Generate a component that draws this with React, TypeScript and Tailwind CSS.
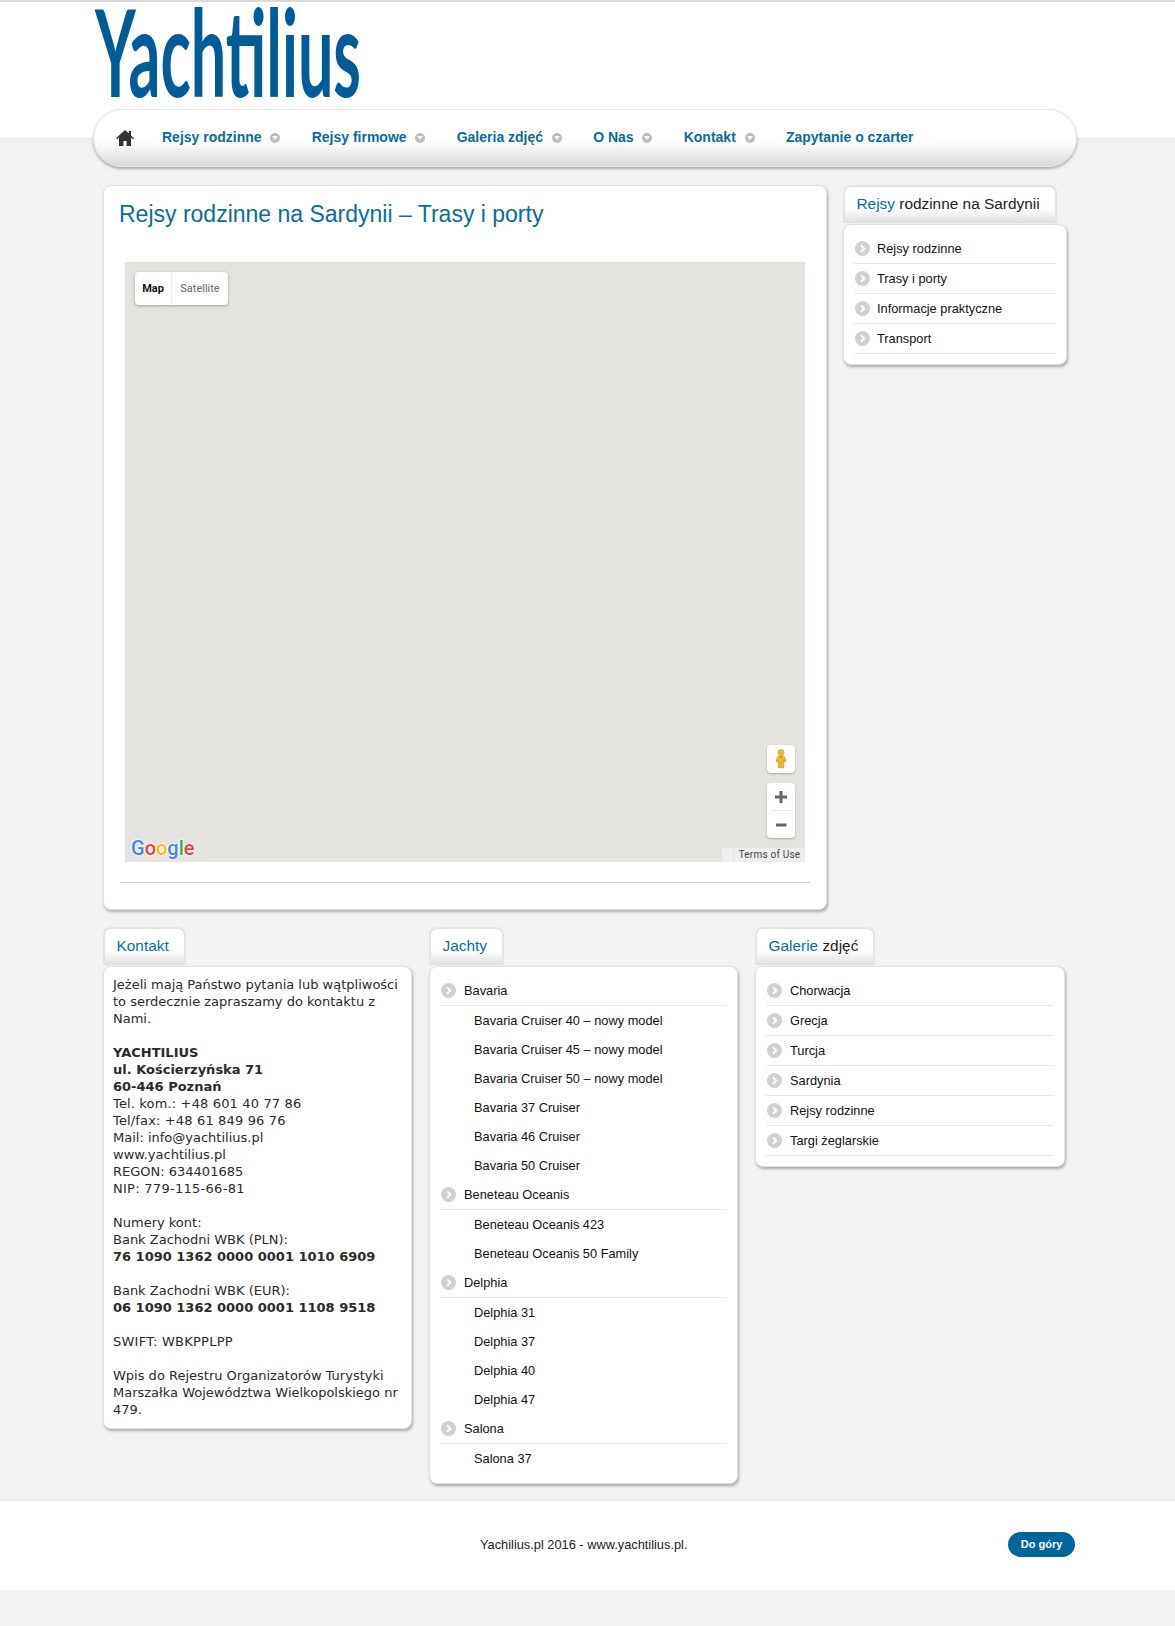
import React from 'react';

const arial = "font-['Liberation_Sans',Arial,sans-serif]";

const Bullet = () => (
    <span className="flex h-[15px] w-[15px] shrink-0 items-center justify-center rounded-full bg-[#d0d0d0]">
        <svg width="9" height="9" viewBox="0 0 9 9" fill="none">
            <path d="M3 1.2 6.3 4.5 3 7.8" stroke="#fff" strokeWidth="2" />
        </svg>
    </span>
);

const NavDot = () => (
    <span className="flex h-[10px] w-[10px] shrink-0 items-center justify-center rounded-full bg-[#bdbdbd]">
        <svg width="6" height="4" viewBox="0 0 6 4">
            <path d="M0 0h6L3 4z" fill="#fff" />
        </svg>
    </span>
);

const HomeIcon = () => (
    <svg width="18" height="16" viewBox="0 0 18 16" className="shrink-0">
        <path d="M9 0 0 8.2l.9 1L3 7.4V16h4.4v-5h3.2v5H15V7.4l2.1 1.8.9-1-3-2.7V1h-2.200v2.500z" fill="#333" />
    </svg>
);

const Tab = ({ blue, rest }: { blue: string; rest?: string }) => (
    <div className="h-[38px] w-fit rounded-t-lg border-2 border-b-0 border-[#e4e4e4] bg-gradient-to-b from-white from-[60%] to-[#dedede] pl-[11.5px] pr-[15px] pt-[7px] text-[15.4px] leading-[20px] text-[#222]">
        <span className="text-[#0b6c9f]">{blue}</span>
        {rest ? ` ${rest}` : ''}
    </div>
);

const Box = ({ className, children }: { className?: string; children: React.ReactNode }) => (
    <div className={`mt-px rounded-lg border border-[#e0e0e0] bg-white shadow-[1px_2px_3px_rgba(0,0,0,0.3)] ${className ?? ''}`}>
        {children}
    </div>
);

const ListRow = ({ label, wide }: { label: string; wide?: boolean }) => (
    <div className={`flex h-[30px] items-center border-b border-[#e8e8e8] pl-[1px] pr-[4px] text-[12.8px] text-[#111] ${wide ? 'gap-[8px]' : 'gap-[7px]'}`}>
        <Bullet />
        <span>{label}</span>
    </div>
);

const SubRow = ({ label }: { label: string }) => (
    <div className="flex h-[29px] items-center pl-[34px] text-[12.8px] text-[#111]">{label}</div>
);

const yachts = [
    { name: 'Bavaria', items: ['Bavaria Cruiser 40 – nowy model', 'Bavaria Cruiser 45 – nowy model', 'Bavaria Cruiser 50 – nowy model', 'Bavaria 37 Cruiser', 'Bavaria 46 Cruiser', 'Bavaria 50 Cruiser'] },
    { name: 'Beneteau Oceanis', items: ['Beneteau Oceanis 423', 'Beneteau Oceanis 50 Family'] },
    { name: 'Delphia', items: ['Delphia 31', 'Delphia 37', 'Delphia 40', 'Delphia 47'] },
    { name: 'Salona', items: ['Salona 37'] },
];

const navItems = ['Rejsy rodzinne', 'Rejsy firmowe', 'Galeria zdjęć', 'O Nas', 'Kontakt'];

const MapBox = () => (
    <div className="relative ml-[21px] mt-[34px] h-[600px] w-[680px] bg-[#e5e3df] font-['Roboto',sans-serif]">
        <div className="absolute left-[10px] top-[10px] flex h-[33px] w-[93px] items-center rounded-sm bg-white pt-px text-[11px] shadow-[0_1px_3px_rgba(0,0,0,0.3)]">
            <span className="flex h-full w-[37px] items-center justify-center border-r border-[#eee] font-bold text-[#111]">Map</span>
            <span className="flex h-full flex-1 items-center justify-center text-[#666]">Satellite</span>
        </div>

        <div className="absolute left-[642px] top-[483px] flex h-[28px] w-[28px] items-center justify-center rounded-sm bg-white shadow-[0_1px_2px_rgba(0,0,0,0.25)]">
            <svg width="12" height="20" viewBox="0 0 12 20">
                <circle cx="6" cy="3.500" r="3" fill="#f6b81d" stroke="#a88432" strokeWidth="0.5" />
                <path d="M3 7h6l2 5-1 1-1-2-.3 8H6.500V14h-1v5H3.300L3 11l-1 2-1-1z" fill="#f6b81d" stroke="#a88432" strokeWidth="0.5" />
                <circle cx="6" cy="8" r="1" fill="#e8622c" />
            </svg>
        </div>

        <div className="absolute left-[642px] top-[521px] flex h-[55px] w-[28px] flex-col items-center rounded-sm bg-white shadow-[0_1px_2px_rgba(0,0,0,0.25)]">
            <div className="flex h-[27px] items-center justify-center">
                <svg width="12" height="12" viewBox="0 0 12 12"><path d="M4.500 0h3v4.500H12v3H7.500V12h-3V7.500H0v-3h4.500z" fill="#666" /></svg>
            </div>
            <div className="h-px w-[19px] bg-[#e6e6e6]" />
            <div className="flex h-[27px] items-center justify-center">
                <svg width="12" height="12" viewBox="0 0 12 12"><path d="M1 4.500h10.500v3H1z" fill="#666" /></svg>
            </div>
        </div>

        <div className="absolute bottom-[1px] left-[6px] font-['Roboto',sans-serif] text-[20px] font-medium leading-[26px] [text-shadow:0_0_2px_#fff,0_0_2px_#fff,0_0_3px_#fff]">
            <span className="text-[#4285f4]">G</span>
            <span className="text-[#ea4335]">o</span>
            <span className="text-[#fbbc05]">o</span>
            <span className="text-[#4285f4]">g</span>
            <span className="text-[#34a853]">l</span>
            <span className="text-[#ea4335]">e</span>
        </div>

        <div className="absolute bottom-0 right-0 flex h-[14px] text-[10px] tracking-[0.2px] text-[#444]">
            <span className="mr-px h-full w-[11px] bg-[#efeeec]" />
            <span className="flex h-full w-[71px] items-center justify-center bg-[#efeeec] pb-px">Terms of Use</span>
        </div>
    </div>
);

const App = () => {
    return (
        <div className={`min-h-[1626px] bg-[#f2f2f2] ${arial}`}>
            <header className="h-[139px] border-b border-[#e8e8e8] border-t-2 border-t-[#d9d9d9] bg-white">
                <div className="ml-[95px] h-[102px] w-[600px]">
                    <svg width="600" height="102" viewBox="0 0 600 102" className="overflow-visible">
                        <text x="0" y="95" textLength="266" lengthAdjust="spacingAndGlyphs" fontFamily="Lato, sans-serif" fontWeight="700" fontSize="120" fill="#005b96">Yachtilius</text>
                    </svg>
                </div>
            </header>

            <div className="ml-[93px] w-[984px]">
                <nav className="relative -mt-[30px] flex h-[58px] items-center rounded-[30px] border border-[#e4e4e4] bg-gradient-to-b from-white from-[55%] to-[#d9d9d9] pb-[1px] pl-[22px] text-[14px] font-bold text-[#0b6a9e] shadow-[0_2px_3px_rgba(0,0,0,0.3)]">
                    <HomeIcon />
                    <div className="ml-[28px] flex items-center gap-[31.4px]">
                        {navItems.map((item) => (
                            <span key={item} className="flex items-center gap-[8.7px]">
                                {item}
                                <NavDot />
                            </span>
                        ))}
                        <span>Zapytanie o czarter</span>
                    </div>
                </nav>

                <div className="ml-[10px] mt-[18px] flex items-start gap-[16px]">
                    <main className="h-[725px] w-[724px] rounded-lg border border-[#e0e0e0] bg-white shadow-[1px_2px_3px_rgba(0,0,0,0.3)]">
                        <h1 className="ml-[15px] mt-[14px] text-[23px] leading-[28px] text-[#0b6c9f]">Rejsy rodzinne na Sardynii – Trasy i porty</h1>
                        <MapBox />
                        <div className="ml-[16px] mt-[20px] h-px w-[690px] bg-[#d4d4d4]" />
                    </main>

                    <aside className="w-[224px]">
                        <Tab blue="Rejsy" rest="rodzinne na Sardynii" />
                        <Box className="px-[10px] pb-[10px] pt-[9px]">
                            {['Rejsy rodzinne', 'Trasy i porty', 'Informacje praktyczne', 'Transport'].map((label) => (
                                <ListRow key={label} label={label} />
                            ))}
                        </Box>
                    </aside>
                </div>

                <div className="ml-[10px] mt-[17px] flex items-start gap-[17px]">
                    <section className="w-[309px]">
                        <Tab blue="Kontakt" />
                        <Box className="pb-[10px] pl-[9px] pr-[8px] pt-[9px] font-['DejaVu_Sans',Verdana,sans-serif] text-[13px] leading-[17px] text-[#2a2a2a]">
                            <p>Jeżeli mają Państwo pytania lub wątpliwości to serdecznie zapraszamy do kontaktu z Nami.</p>
                            <br />
                            <p className="font-bold">YACHTILIUS<br />ul. Kościerzyńska 71<br />60-446 Poznań</p>
                            <p>
                                <span className="tracking-[0.15px]">Tel. kom.: +48 601 40 77 86<br />Tel/fax: +48 61 849 96 76</span><br />
                                Mail: info@yachtilius.pl<br />www.yachtilius.pl<br />REGON: 634401685<br />
                                <span className="tracking-[0.28px]">NIP: 779-115-66-81</span>
                            </p>
                            <br />
                            <p>Numery kont:<br />Bank Zachodni WBK (PLN):<br /><b>76 1090 1362 0000 0001 1010 6909</b></p>
                            <br />
                            <p>Bank Zachodni WBK (EUR):<br /><b>06 1090 1362 0000 0001 1108 9518</b></p>
                            <br />
                            <p className="tracking-[0.25px]">SWIFT: WBKPPLPP</p>
                            <br />
                            <p>Wpis do Rejestru Organizatorów Turystyki Marszałka Województwa Wielkopolskiego nr 479.</p>
                        </Box>
                    </section>

                    <section className="w-[309px]">
                        <Tab blue="Jachty" />
                        <Box className="px-[10px] pb-[10px] pt-[9px]">
                            {yachts.map((group) => (
                                <div key={group.name}>
                                    <ListRow label={group.name} wide />
                                    {group.items.map((item) => (
                                        <SubRow key={item} label={item} />
                                    ))}
                                </div>
                            ))}
                        </Box>
                    </section>

                    <section className="w-[310px]">
                        <Tab blue="Galerie" rest="zdjęć" />
                        <Box className="px-[10px] pb-[10px] pt-[9px]">
                            {['Chorwacja', 'Grecja', 'Turcja', 'Sardynia', 'Rejsy rodzinne', 'Targi żeglarskie'].map((label) => (
                                <ListRow key={label} label={label} wide />
                            ))}
                        </Box>
                    </section>
                </div>
            </div>

            <footer className="mt-[16px] flex h-[90px] items-center border-t border-[#e8e8e8] bg-white pb-[2px] text-[12.8px] text-[#222]">
                <span className="ml-[480px] w-[208px] whitespace-nowrap">Yachilius.pl 2016 - www.yachtilius.pl.</span>
                <a className="ml-[320px] flex h-[25px] w-[67px] items-center justify-center rounded-[13px] bg-[#00669a] text-[11px] font-bold text-white">Do góry</a>
            </footer>
        </div>
    );
};

export default App;
